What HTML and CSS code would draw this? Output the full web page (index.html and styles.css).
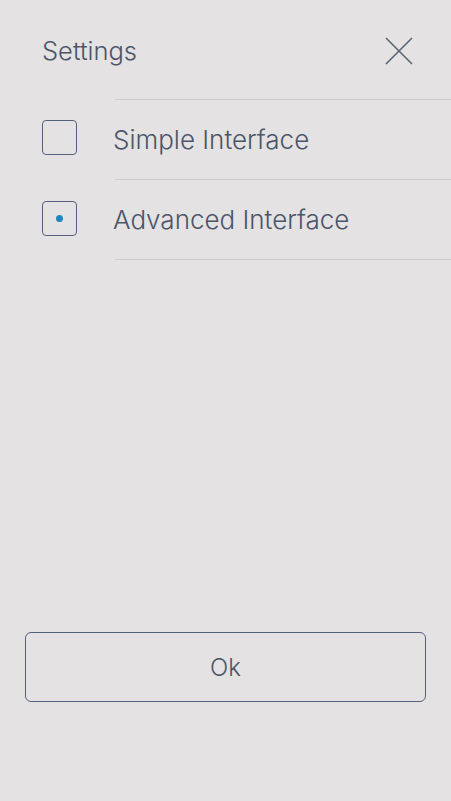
FILE: index.html
```html
<!DOCTYPE html>
<html>
<head>
<meta charset="utf-8">
<link rel="stylesheet" href="styles.css">
</head>
<body>
<div class="screen">
  <header class="header">
    <h1 class="title">Settings</h1>
    <button class="close" aria-label="Close">
      <svg width="28" height="28" viewBox="0 0 28 28"><path d="M1 1 L27 27 M27 1 L1 27" stroke="#5a6477" stroke-width="1.6" fill="none"/></svg>
    </button>
  </header>
  <ul class="list">
    <li class="row">
      <span class="box"></span>
      <span class="label">Simple Interface</span>
    </li>
    <li class="row">
      <span class="box checked"><span class="dot"></span></span>
      <span class="label">Advanced Interface</span>
    </li>
  </ul>
  <button class="ok">Ok</button>
</div>
</body>
</html>
```
FILE: styles.css
```css
html, body {
  margin: 0;
  padding: 0;
  background: #e4e2e3;
}
.screen {
  font-family: Inter, "Liberation Sans", Arial, sans-serif;
  font-weight: 300;
  color: #4b5569;
  width: 451px;
  height: 801px;
  display: flex;
  flex-direction: column;
}
.header {
  height: 99px;
  display: flex;
  align-items: center;
  justify-content: space-between;
  padding: 2px 38px 0 42px;
  box-sizing: border-box;
}
.title {
  margin: 0;
  font-size: 25.5px;
  font-weight: 300;
}
.close {
  background: none;
  border: 0;
  padding: 0;
  width: 28px;
  height: 28px;
  display: flex;
}
.list {
  list-style: none;
  margin: 0;
  padding: 0;
}
.row {
  display: flex;
  align-items: center;
  padding-left: 42px;
}
.box {
  width: 35px;
  height: 35px;
  box-sizing: border-box;
  border: 1.5px solid #56607a;
  border-radius: 4px;
  margin-right: 38px;
  margin-top: -3px;
  display: flex;
  align-items: center;
  justify-content: center;
}
.dot {
  width: 7px;
  height: 7px;
  border-radius: 50%;
  background: #1e86bf;
}
.label {
  flex: 1;
  height: 80px;
  box-sizing: border-box;
  border-top: 1px solid #cdcbcf;
  display: flex;
  align-items: center;
  font-size: 26px;
  text-indent: -2px;
}
.row:last-child .label {
  height: 81px;
  border-bottom: 1px solid #cdcbcf;
}
.ok {
  margin: 372px 25px 0;
  height: 70px;
  box-sizing: border-box;
  border: 1.5px solid #56607a;
  border-radius: 6px;
  background: transparent;
  font-family: inherit;
  font-weight: 300;
  font-size: 24px;
  color: #4b5569;
}
```
